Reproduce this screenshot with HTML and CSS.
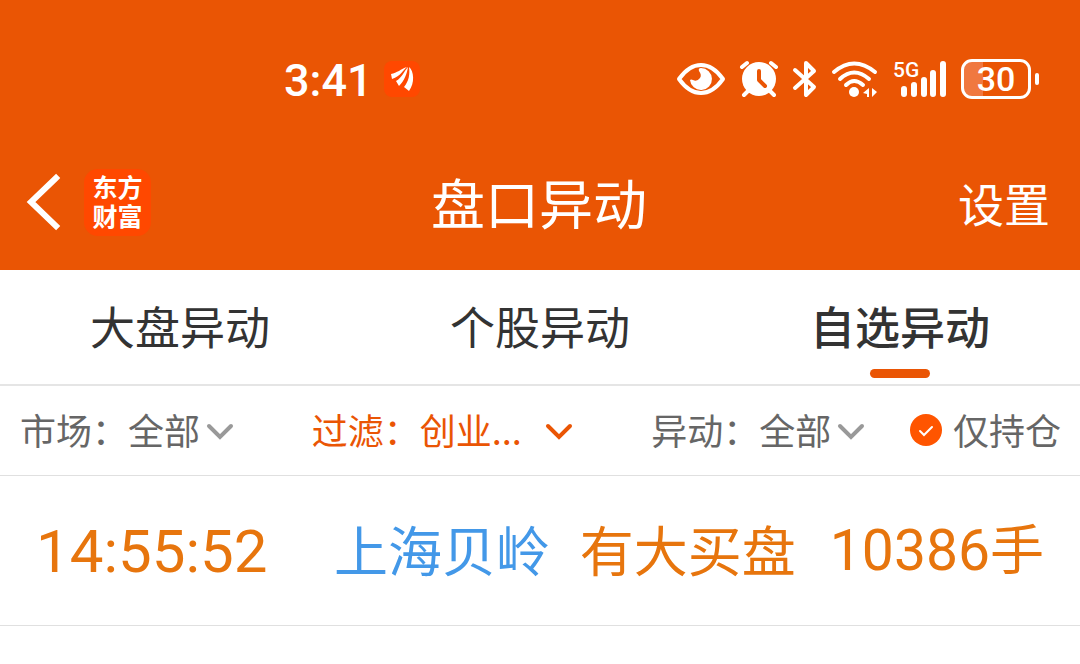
FILE: index.html
```html
<!DOCTYPE html>
<html lang="zh-CN">
<head>
    <meta charset="UTF-8" />
    <meta name="viewport" content="width=device-width, initial-scale=1.0" />
    <title>盘口异动</title>
    <link rel="stylesheet" href="styles.css">
</head>
<body>
    <header class="header">
        <!-- 状态栏 -->
        <div class="status-bar">
            <span class="clock">3:41</span>
            <svg class="app-badge" width="36" height="36" viewBox="0 0 36 36" aria-hidden="true">
                <rect width="36" height="36" rx="8" fill="#ff4800"/>
                <path fill="#fff" d="M7 13C13 12 17 8 23 6C19 9 17 15 8 18Z"/>
                <path fill="#fff" d="M24 6C23 13 20 20 15 25L12 20C18 17 20 10 24 6Z"/>
                <path fill="#fff" d="M25 6C30 10 31 22 25 30L20 26C25 20 26 13 25 6Z"/>
            </svg>
            <div class="status-icons">
                <svg width="48" height="34" viewBox="0 0 48 34" aria-hidden="true">
                    <path d="M2 17Q12 3 24 3T46 17Q36 31 24 31T2 17Z" fill="none" stroke="#fff" stroke-width="4" stroke-linejoin="round"/>
                    <path fill="#fff" d="M24 6A11 11 0 1 1 13 18Q14 17 16 18Q20 20 23 16Q25 13 22 9Q21 6 24 6Z"/>
                </svg>
                <svg width="40" height="38" viewBox="0 0 40 38" aria-hidden="true">
                    <path d="M3 7L8 3M37 7L32 3M9 31L5 35M31 31L35 35" fill="none" stroke="#fff" stroke-width="4" stroke-linecap="round"/>
                    <circle cx="20" cy="19" r="17" fill="#fff"/>
                    <path d="M20 11V20L26 26" fill="none" stroke="#ea5504" stroke-width="4" stroke-linecap="round" stroke-linejoin="round"/>
                </svg>
                <svg width="24" height="38" viewBox="0 0 24 38" aria-hidden="true">
                    <path d="M2 10L21 27L13 35V3L21 11L2 28" fill="none" stroke="#fff" stroke-width="4" stroke-linecap="round" stroke-linejoin="round"/>
                </svg>
                <svg width="48" height="38" viewBox="0 0 48 38" aria-hidden="true">
                    <g fill="none" stroke="#fff" stroke-width="4" stroke-linecap="round">
                        <path d="M3 12Q23 -5 44 12M9 19Q23 6 38 19M15 25Q23 17 32 25"/>
                    </g>
                    <circle cx="23" cy="32" r="5" fill="#fff"/>
                    <path fill="#fff" d="M38 28V37H36V34L32 33ZM41 28L46 32L41 37Z"/>
                </svg>
                <div class="signal">
                    <span class="signal-type">5G</span>
                    <svg width="46" height="36" viewBox="0 0 46 36" aria-hidden="true">
                        <path d="M3 28V33M13 24V33M23 19V33M32 12V33M42 3V33" stroke="#fff" stroke-width="6" stroke-linecap="round"/>
                    </svg>
                </div>
                <div class="battery"><span class="battery-level">30</span></div>
            </div>
        </div>

        <!-- 导航栏 -->
        <nav class="nav-bar">
            <div class="nav-left">
                <button class="back" type="button" aria-label="返回">
                    <svg width="32" height="56" viewBox="2 0 32 56" aria-hidden="true">
                        <path d="M30 4L5 28L30 52" fill="none" stroke="#fff" stroke-width="6" stroke-linecap="square"/>
                    </svg>
                </button>
                <div class="logo">东方<br>财富</div>
            </div>
            <h1 class="title">盘口异动</h1>
            <button class="settings" type="button">设置</button>
        </nav>
    </header>

    <main>
        <div class="tabs" role="tablist">
            <button class="tab" type="button" role="tab" aria-selected="false">大盘异动</button>
            <button class="tab" type="button" role="tab" aria-selected="false">个股异动</button>
            <button class="tab active" type="button" role="tab" aria-selected="true">自选异动</button>
        </div>

        <form class="filters">
            <div class="filter">
                <label for="market">市场：</label>
                <div class="picker">
                    <select id="market"><option>全部</option></select>
                    <svg class="arrow" width="28" height="18" viewBox="0 0 28 18" aria-hidden="true"><path d="M3 3L14 14L25 3"/></svg>
                </div>
            </div>
            <div class="filter filter-on">
                <label for="board">过滤：</label>
                <div class="picker">
                    <select id="board"><option>创业...</option></select>
                    <svg class="arrow" width="28" height="18" viewBox="0 0 28 18" aria-hidden="true"><path d="M3 3L14 14L25 3"/></svg>
                </div>
            </div>
            <div class="filter">
                <label for="change">异动：</label>
                <div class="picker">
                    <select id="change"><option>全部</option></select>
                    <svg class="arrow" width="28" height="18" viewBox="0 0 28 18" aria-hidden="true"><path d="M3 3L14 14L25 3"/></svg>
                </div>
            </div>
            <div class="filter">
                <input class="check" type="checkbox" id="holding" checked>
                <label for="holding">仅持仓</label>
            </div>
        </form>

        <!-- 异动列表 -->
        <ul class="list">
            <li class="row">
                <time class="time">14:55:52</time>
                <a class="stock" href="#">上海贝岭</a>
                <span>有大买盘</span>
                <span class="volume"><span class="number">10386</span>手</span>
            </li>
        </ul>
    </main>
</body>
</html>
```
FILE: styles.css
```css
* {
    box-sizing: border-box;
}

body {
    margin: 0;
    background: #fff;
    color: #333;
    font-family: "Noto Sans CJK SC", sans-serif;
}

button,
select {
    padding: 0;
    border: none;
    background: none;
    color: inherit;
    font: inherit;
    cursor: pointer;
}

svg {
    display: block;
    flex: none;
    overflow: visible;
}

.header {
    background: #ea5504;
    color: #fff;
}

/* 数字用 Roboto */
.clock,
.signal-type,
.battery-level,
.time,
.number {
    font-family: Roboto, "Noto Sans CJK SC", sans-serif;
}

/* 状态栏 */
.status-bar {
    display: flex;
    align-items: center;
    height: 138px;
    padding: 20px 41px 0 284px;
}

.clock {
    padding-top: 4px;
    font-size: 45px;
    font-weight: 500;
    line-height: 48px;
}

.app-badge {
    margin-left: 11px;
}

.status-icons {
    display: flex;
    align-items: center;
    gap: 14px;
    margin-left: auto;
}

.signal {
    position: relative;
    padding-left: 8px;
}

.signal-type {
    position: absolute;
    top: -2px;
    left: 0;
    font-size: 21px;
    font-weight: 500;
    line-height: 22px;
}

.battery {
    position: relative;
    width: 70px;
    height: 40px;
    margin-right: 8px;
    border: 3px solid #fff;
    border-radius: 11px;
    background: linear-gradient(to right, #f07840 30%, transparent 30%);
    text-align: center;
}

.battery::after {
    content: "";
    position: absolute;
    top: 11px;
    right: -11px;
    width: 4px;
    height: 12px;
    border-radius: 2px;
    background: #fff;
}

.battery-level {
    display: block;
    font-size: 34px;
    font-weight: 500;
    line-height: 35px;
}

/* 导航栏 */
.nav-bar {
    display: grid;
    grid-template-columns: 1fr auto 1fr;
    align-items: center;
    height: 132px;
    padding: 0 30px 4px 28px;
}

.nav-left {
    display: flex;
    align-items: center;
    gap: 24px;
}

.logo {
    width: 67px;
    height: 67px;
    padding-top: 3px;
    border-radius: 14px;
    background: #ff4800;
    font-size: 25px;
    font-weight: 700;
    line-height: 29px;
    text-align: center;
}

.title {
    margin: 0;
    font-size: 54px;
    font-weight: 400;
    line-height: 64px;
}

.settings {
    justify-self: end;
    font-size: 46px;
    line-height: 64px;
}

/* 标签页 */
.tabs {
    display: grid;
    grid-template-columns: repeat(3, 1fr);
    border-bottom: 2px solid #e5e5e5;
}

.tab {
    position: relative;
    height: 114px;
    padding-bottom: 2px;
    font-size: 45px;
    line-height: 64px;
}

.tab.active {
    font-weight: 500;
}

.tab.active::after {
    content: "";
    position: absolute;
    bottom: 6px;
    left: calc(50% - 30px);
    width: 60px;
    height: 9px;
    border-radius: 5px;
    background: #ea5504;
}

/* 筛选栏 */
.filters {
    display: grid;
    grid-template-columns: 292fr 340fr 259fr 150fr;
    align-items: center;
    height: 90px;
    padding: 0 19px 4px 20px;
    border-bottom: 1px solid #e0e0e0;
    color: #666;
    font-size: 36px;
    line-height: 48px;
}

.filter {
    display: flex;
    align-items: center;
    white-space: nowrap;
}

.filter-on {
    color: #ea5504;
}

.picker {
    position: relative;
}

.picker select {
    display: block;
    padding-right: 33px;
    appearance: none;
}

.filter-on select {
    padding-right: 50px;
}

.arrow {
    position: absolute;
    top: 18px;
    right: 0;
    fill: none;
    stroke: #999;
    stroke-width: 4;
    stroke-linecap: round;
    pointer-events: none;
}

.filter-on .arrow {
    stroke: #ea5504;
}

.check {
    width: 32px;
    height: 32px;
    margin: 2px 11px 0 0;
    border: 2px solid #999;
    border-radius: 50%;
    appearance: none;
}

.check:checked {
    border: none;
    background: #ff5500 url("data:image/svg+xml,%3Csvg xmlns='http://www.w3.org/2000/svg' viewBox='0 0 32 32'%3E%3Cpath d='M10 17L14 21L22 13' fill='none' stroke='white' stroke-width='2' stroke-linecap='round'/%3E%3C/svg%3E");
}

/* 异动列表 */
.list {
    margin: 0;
    padding: 0;
    list-style: none;
}

.row {
    display: grid;
    grid-template-columns: 298fr 246fr 250fr 214fr;
    align-items: center;
    height: 150px;
    padding: 0 36px 4px;
    border-bottom: 1px solid #e0e0e0;
    color: #e7750d;
    font-size: 54px;
    line-height: 64px;
    white-space: nowrap;
}

.time {
    padding-top: 6px;
    font-size: 60px;
}

.number {
    font-size: 57px;
}

.stock {
    color: #4398e8;
    text-decoration: none;
}

.volume {
    justify-self: end;
}
```
